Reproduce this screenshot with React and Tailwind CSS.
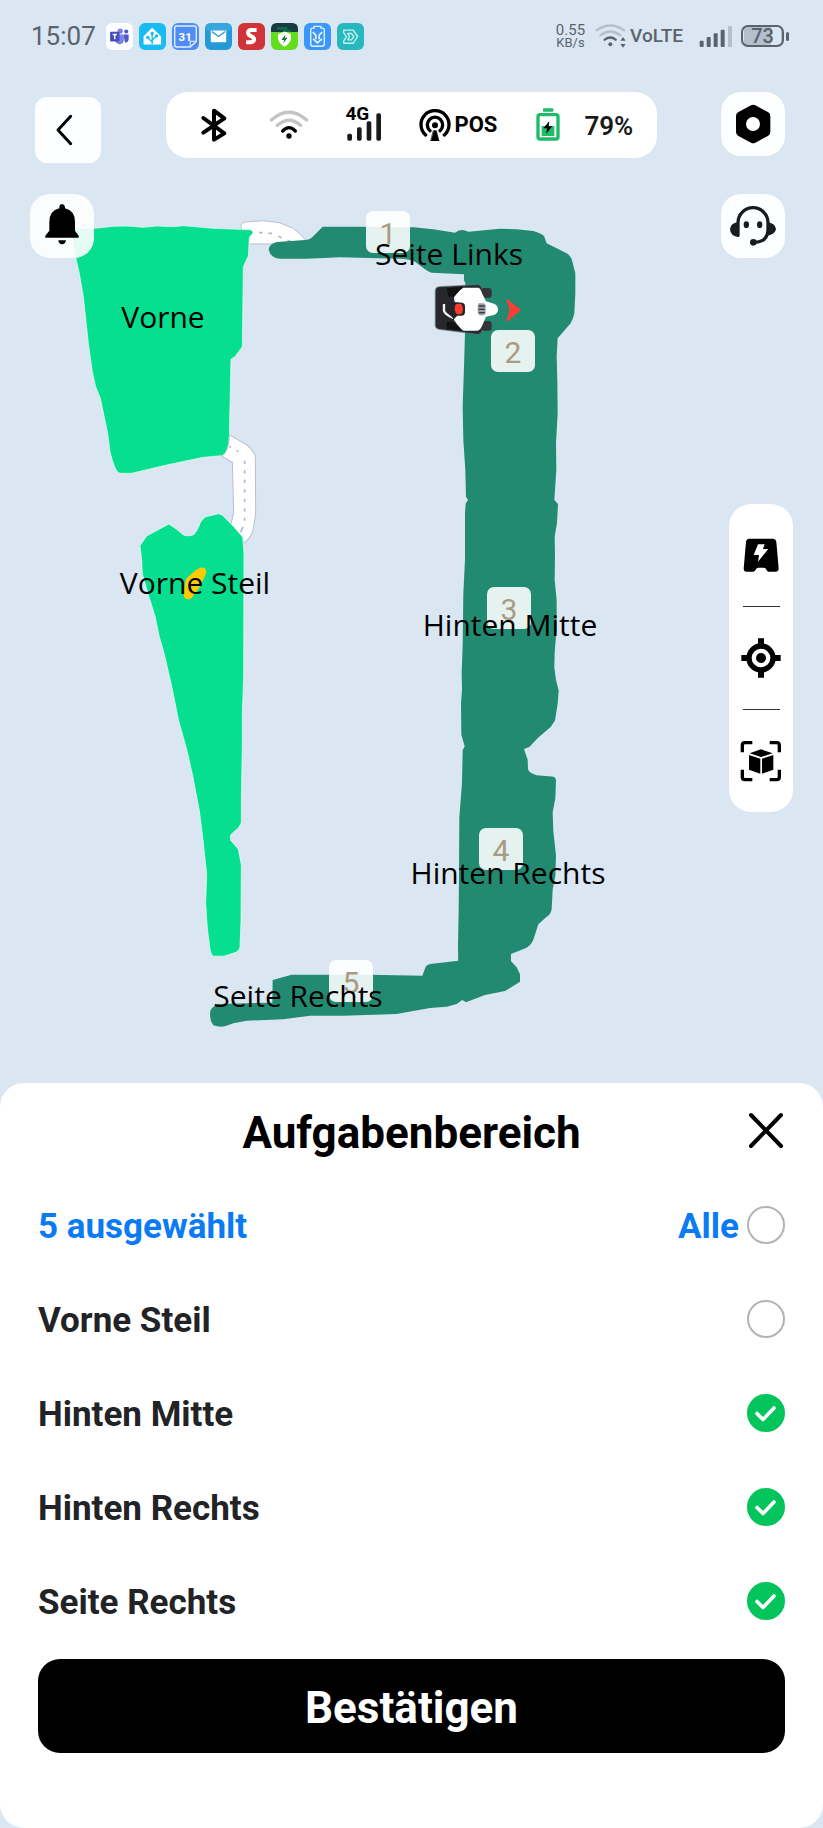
import React from "react";

const zones = [
  { name: "Vorne Steil", selected: false },
  { name: "Hinten Mitte", selected: true },
  { name: "Hinten Rechts", selected: true },
  { name: "Seite Rechts", selected: true },
];

const mapLabels = [
  { text: "Vorne", x: 163, y: 328 },
  { text: "Vorne Steil", x: 195, y: 594 },
  { text: "Seite Links", x: 449, y: 265 },
  { text: "Hinten Mitte", x: 510, y: 636 },
  { text: "Hinten Rechts", x: 508, y: 884 },
  { text: "Seite Rechts", x: 298, y: 1007 },
];

const mapBadges = [
  { n: 1, x: 366, y: 211 },
  { n: 2, x: 491, y: 330 },
  { n: 3, x: 487, y: 587 },
  { n: 4, x: 479, y: 828 },
  { n: 5, x: 329, y: 960 },
];

function Mower() {
  return (
    <g>
      <path d="M106 332Q107 320 120 320L235 314Q245 318 246 330V450Q245 460 235 463L118 448Q106 446 106 436Z" fill="#27282d" stroke="#5d6b70" strokeOpacity=".5" strokeWidth="4" />
      <path d="M140 325L190 320L160 350L145 350Z M140 425L160 425L190 452L140 447Z" fill="#111214" />
      <rect x="244" y="324" width="31" height="29" rx="9" fill="#333338" />
      <rect x="244" y="423" width="31" height="29" rx="9" fill="#333338" />
      <path d="M190 323H236Q242 326 246 340L258 364L282 371Q294 376 294 388Q294 401 282 405L258 410L246 438Q242 449 234 452H190Q180 446 162 420L166 388L162 352Q178 330 190 323Z" fill="#fff" />
      <path d="M132 372V392Q134 402 160 414" fill="none" stroke="#f4f4f4" strokeWidth="7" />
      <path d="M142 366L154 356L164 366L188 368Q195 370 195 378V398Q194 406 186 407H172L162 417L146 402L140 390Z" fill="#252529" />
      <path d="M166 374Q176 368 186 374L189 388L186 400Q176 406 167 399L164 388Z" fill="#ff3b30" />
      <path d="M236 370H252L257 376V400L252 406H238L233 398V377Z" fill="#9a9da3" />
      <path d="M237 378H254M236 388H254M237 398H254" stroke="#36373b" strokeWidth="4" />
      <path d="M318 359Q321 356 326 361L359 386Q364 390 359 394L326 421Q320 426 318 422Q328 402 328 390Q328 378 318 359Z" fill="#fb3e32" />
    </g>
  );
}

function GardenMap() {
  return (
    <svg className="absolute inset-0 h-full w-full" viewBox="0 0 823 1083" preserveAspectRatio="xMidYMin meet" role="img" aria-label="Karte">
      {/* upper passage */}
      <g transform="translate(0 170) scale(.33333)">
        <path d="M722 168Q724 156 738 156L790 152L838 158L880 175L900 192L918 212L880 222H740Z" fill="#fff" stroke="#b9bfd3" strokeWidth="3" />
        <path d="M777 188H788M805 190H816M835 199L845 203M862 211L872 214" stroke="#b4b7c6" strokeWidth="5" />
        <path d="M222 175L285 175L340 169L380 168L430 172L470 168L520 170L550 167L640 175L750 179Q760 181 759 189L748 202L745 258L730 290L727 530L705 560L693 568L688 800Q686 852 665 857L610 862L500 885L395 910H362Q350 909 343 888Q336 870 330 845L323 790L301 685L287 650L277 605L265 520L250 380L238 310L222 240L216 190Z" fill="#05df8f" stroke="#eafff7" strokeWidth="2" strokeLinejoin="round" />
      </g>
      {/* lower passage and Vorne Steil */}
      <g transform="translate(100 430) scale(.33333 .35077)">
        <path d="M388 14L440 42Q462 60 466 74L467 240L458 290Q448 312 432 322L393 268L401 235L397 92L365 75Q388 60 388 14Z" fill="#fff" stroke="#b9bfd3" strokeWidth="3" strokeLinejoin="round" />
        <path d="M434 88V262" stroke="#b4b7c6" strokeWidth="5" strokeDasharray="9 18" />
        <path d="M387 47L393 49M410 59L415 61M429 276L422 291" stroke="#b4b7c6" strokeWidth="5" />
        <path d="M120 330L140 302L207 268L230 283L250 299Q270 305 283 297Q294 283 302 262L315 248L355 239Q365 240 372 247L400 275L428 305L432 350L431 700L427 810L427 900L424 1050V1120L415 1135L394 1152Q388 1162 392 1170L415 1195L424 1240L423 1400L420 1474Q419 1484 408 1489L372 1500H340Q333 1496 330 1480L322 1420L317 1350L320 1265L308 1160L298 1085L278 985L260 910L235 825L215 730L192 635L178 590L165 530L145 470L127 410L125 370Z" fill="#05df8f" stroke="#eafff7" strokeWidth="2" strokeLinejoin="round" />
        <path d="M258 424L284 402Q298 391 310 392Q322 397 318 410Q312 422 300 446L275 480Q264 487 254 478Q248 470 252 455Z" fill="#fdca06" />
      </g>
      {/* selected zones */}
      <g fill="#238a72">
        <path transform="translate(400 180) scale(.33333)" d="M-394 208Q-392 192 -370 186L-285 180Q-274 180 -265 173L-232 140H-130L0 142H40L100 148L165 158Q182 144 205 155L300 146L350 148L400 153Q425 160 432 168L440 190L500 220Q512 228 515 237L526 280V340L523 400Q520 416 512 430L473 475L470 530L472 600L473 700L468 790L469 870L463 960V985H204V960L198 950L196 870L190 780L188 680L192 560L195 460L196 310L192 300V283L95 278Q84 275 75 268L45 245Q30 237 0 236L-180 232L-280 236H-360Q-390 234 -394 208Z" />
        <path transform="translate(190 930) scale(.33333)" d="M805 92L720 102Q709 105 707 110L697 137L540 134H305L248 150L247 218L85 222Q68 228 61 242Q57 270 70 286Q86 292 105 289L130 280L170 272L280 268L360 257L460 257L620 252L720 234L770 230L800 222L817 210L828 217L885 195L945 183L990 155L990 133L980 112L962 92V72L980 40H805Z" />
        <path transform="translate(400 480) scale(.33333 .34439)" d="M204 58L197 68L195 95V230L190 330L188 480L185 560L186 610L183 650L184 740L194 773L188 785L186 880L178 980L177 1150L176 1250L174 1350L177 1430H333V1376L380 1358Q396 1348 401 1332L415 1290L440 1268Q454 1260 455 1245L458 1190L466 1150L468 1090L460 1020L458 965L466 925L468 872Q467 862 456 861L410 857Q388 852 384 840L383 812L372 781L388 775L415 748L452 717L465 698L473 650L476 612L468 580L463 545L464 500L470 430V350L464 290L465 220L464 165L471 125L474 70L463 58Z" />
      </g>
      <g transform="translate(400 180) scale(.33333)">
        <Mower />
      </g>
      {mapBadges.map((b) => (
        <g key={b.n}>
          <rect x={b.x} y={b.y} width="44" height="42" rx="7" fill="#fff" fillOpacity=".89" />
          <text x={b.x + 22} y={b.y + 33} textAnchor="middle" fill="#a99b83" className="font-['Roboto',sans-serif] text-[30px]">
            {b.n}
          </text>
        </g>
      ))}
      {mapLabels.map((l) => (
        <text key={l.text} x={l.x} y={l.y} textAnchor="middle" className="font-['Open_Sans',sans-serif] text-[30px]">
          {l.text}
        </text>
      ))}
    </svg>
  );
}

function AppIcon({ color, children }) {
  return (
    <svg className="size-[27px]" viewBox="0 0 80 80" aria-hidden="true">
      <rect width="80" height="80" rx="18" fill={color} />
      {children}
    </svg>
  );
}

function StatusBar() {
  return (
    <div className="relative flex h-[72px] items-center justify-between pr-[34px] pl-[31px] text-[#59636e]">
      <div className="flex items-center gap-[6px]">
        <time className="pr-1 text-[26px] leading-8">15:07</time>
        <AppIcon color="#fdfeff">
          <circle cx="42" cy="24" r="8" fill="#7b83eb" />
          <circle cx="60" cy="25" r="6" fill="#5059c9" />
          <path d="M52 34H67V48Q66 58 56 58Z" fill="#5059c9" />
          <path d="M28 34H53V50Q52 63 39 63Q29 62 27 52Z" fill="#7b83eb" />
          <rect x="12" y="26" width="28" height="29" rx="3" fill="#464eb8" />
          <path d="M20 34H32M26 34V48" stroke="#fff" strokeWidth="4" />
        </AppIcon>
        <AppIcon color="#18bcf2">
          <path d="M39 16L64 40V62H15V40Z" fill="#fff" stroke="#fff" strokeWidth="3" strokeLinejoin="round" />
          <path d="M39 62V31M39 56L26 44M39 50L52 39" stroke="#18bcf2" strokeWidth="4" fill="none" />
          <circle cx="39" cy="31" r="5" fill="#18bcf2" />
          <circle cx="26" cy="43" r="5" fill="#18bcf2" />
          <circle cx="52" cy="38" r="5" fill="#18bcf2" />
        </AppIcon>
        <AppIcon color="#4f8df5">
          <path d="M14 9H66Q72 9 72 15V54L54 71H14Q8 71 8 65V15Q8 9 14 9Z" fill="none" stroke="#e8f1ff" strokeWidth="4" />
          <path d="M54 71V54H72" fill="none" stroke="#e8f1ff" strokeWidth="3" />
          <text x="39" y="52" textAnchor="middle" fontSize="34" fontWeight="700" fill="#fff">31</text>
        </AppIcon>
        <AppIcon color="#2399d8">
          <path d="M0 18Q0 0 18 0H62Q80 0 80 18L40 40Z" fill="#36a7de" />
          <rect x="17" y="22" width="46" height="35" rx="3" fill="#fff" />
          <path d="M20 25L40 40L60 25" fill="none" stroke="#2399d8" strokeWidth="4" />
        </AppIcon>
        <AppIcon color="#d03438">
          <path d="M55 21H40Q30 21 30 29Q30 35 37 38L44 42Q49 46 47 51Q45 57 38 57H24" fill="none" stroke="#fff" strokeWidth="12" />
        </AppIcon>
        <AppIcon color="#62dc1d">
          <path d="M0 27V18Q0 0 18 0H62Q80 0 80 18V27Z" fill="#173b43" />
          <path d="M18 12H48V20H18ZM34 20H60V27H34Z" fill="#0c6a45" />
          <path d="M40 25L59 33V46Q57 62 40 70Q23 62 21 46V33Z" fill="#fff" />
          <path d="M43 34L31 50H39L36 60L49 44H41Z" fill="#126b4a" />
        </AppIcon>
        <AppIcon color="#3b97fb">
          <path d="M30 10H50V15H55Q60 15 60 21V63Q60 69 54 69H26Q20 69 20 63V21Q20 15 26 15H30Z" fill="none" stroke="#e6f3ff" strokeWidth="4" />
          <path d="M26 27L35 36V48M54 27L45 36V48M27 47L40 59L53 47" fill="none" stroke="#e6f3ff" strokeWidth="5" />
        </AppIcon>
        <AppIcon color="#26b8bd">
          <path d="M20 21H48L61 40L48 60H20V53L28 40L20 29Z" fill="none" stroke="#c8f2f2" strokeWidth="4" strokeLinejoin="round" />
          <path d="M32 31H43L50 40L43 50H32L37 40Z" fill="none" stroke="#c8f2f2" strokeWidth="4" strokeLinejoin="round" />
        </AppIcon>
      </div>
      <div className="flex items-center">
        <div className="mr-[10px] flex flex-col items-center">
          <span className="text-[15px] leading-[14px]">0.55</span>
          <span className="text-[13px] leading-3">KB/s</span>
        </div>
        <svg className="mr-[3px] h-6 w-8" viewBox="555 72 96 72" fill="none" strokeWidth="7" strokeLinecap="round" aria-hidden="true">
          <path d="M560 91Q601 62 642 91M571 106Q601 83 631 106" stroke="#b3bfca" />
          <path d="M584 119Q601 106 617 119" stroke="#59636e" />
          <circle cx="601" cy="133" r="6" fill="#59636e" />
          <path d="M631 122L639 111L647 122ZM631 132L639 143L647 132Z" fill="#59636e" />
        </svg>
        <span className="mr-4 text-[19px] leading-6 font-medium">VoLTE</span>
        <svg className="mr-2 h-6 w-[34px]" viewBox="868 72 102 72" aria-hidden="true">
          <g fill="#59636e">
            <rect x="870" y="122" width="12" height="19" rx="3" />
            <rect x="891" y="111" width="12" height="30" rx="3" />
            <rect x="912" y="100" width="12" height="41" rx="3" />
            <rect x="933" y="89" width="12" height="52" rx="3" />
          </g>
          <rect x="955" y="78" width="12" height="63" rx="3" fill="#b3bfca" />
        </svg>
        <div className="flex items-center gap-[2px]">
          <div className="flex h-[22px] w-[43px] items-center justify-center rounded-[7px] border-2 border-[#59636e] bg-linear-to-r from-[#b3bfca] from-72% to-transparent to-72% bg-origin-content p-px text-[20px] leading-4 font-medium">
            73
          </div>
          <div className="h-[9px] w-[3px] rounded-sm bg-[#59636e]" />
        </div>
      </div>
    </div>
  );
}

function TopBar() {
  return (
    <div className="relative mt-5 flex items-start justify-between pr-[38px] pl-[35px]">
      <button type="button" aria-label="Zurück" className="mt-[5px] flex size-[66px] items-center justify-center rounded-xl bg-[#fcfeff]">
        <svg className="size-10" viewBox="144 331 120 120" aria-hidden="true">
          <path d="M212 350L174 391L212 432" fill="none" stroke="#000" strokeWidth="9" strokeLinecap="round" strokeLinejoin="round" />
        </svg>
      </button>
      <div className="flex h-[66px] w-[491px] items-center gap-[35px] rounded-[22px] bg-white pl-7">
        <svg className="size-10 shrink-0" viewBox="583 316 120 120" aria-label="Bluetooth">
          <path d="M611 355L674 401L643 420V333L674 356L611 399" fill="none" stroke="#000" strokeWidth="12" strokeLinecap="round" strokeLinejoin="round" />
        </svg>
        <svg className="size-10 shrink-0" viewBox="811 316 120 120" fill="none" strokeWidth="10" strokeLinecap="round" aria-label="WLAN">
          <path d="M818 361Q871 314 924 361M836 377Q871 346 906 377" stroke="#c4c4c4" />
          <path d="M852 394Q871 374 890 394" stroke="#000" />
          <circle cx="871" cy="409" r="8" fill="#000" />
        </svg>
        <svg className="size-10 shrink-0 overflow-visible" viewBox="1029 316 120 120" aria-label="4G">
          <text x="1069" y="360" textAnchor="middle" fontSize="57" fontWeight="700">4G</text>
          <g fill="#1a1a1a">
            <rect x="1039" y="402" width="14" height="21" rx="5" />
            <rect x="1068" y="383" width="14" height="40" rx="5" />
            <rect x="1097" y="365" width="14" height="58" rx="5" />
            <rect x="1126" y="341" width="14" height="82" rx="5" />
          </g>
        </svg>
        <div className="flex shrink-0 items-center gap-1">
          <svg className="size-8" viewBox="16 326 96 96" fill="none" stroke="#000" strokeWidth="10" strokeLinecap="round" aria-hidden="true">
            <path d="M36 404A42 42 0 1 1 92 404M49 391A23 23 0 1 1 79 391" />
            <circle cx="64" cy="375" r="9" fill="#000" stroke="none" />
            <path d="M60 391H68L76 422H52Z" fill="#000" stroke="#000" strokeWidth="2" strokeLinejoin="round" />
          </svg>
          <span className="text-[22px] leading-8 font-bold">POS</span>
        </div>
        <div className="flex shrink-0 items-center gap-5">
          <svg className="h-10 w-8" viewBox="358 316 96 120" aria-hidden="true">
            <rect x="391" y="326" width="31" height="10" rx="2" fill="#1fbb69" />
            <rect x="376" y="345" width="60" height="73" rx="6" fill="#fff" stroke="#1fbb69" strokeWidth="10" />
            <rect x="387" y="379" width="38" height="30" fill="#1fbb69" />
            <path d="M410 364L392 386H403L401 402L419 380H408Z" fill="#000" />
          </svg>
          <span className="pt-[2px] text-[26px] leading-8 font-semibold text-[#1a1a1a]">79%</span>
        </div>
      </div>
      <button type="button" aria-label="Einstellungen" className="flex size-16 items-center justify-center rounded-[20px] bg-[#fcfeff]">
        <svg className="size-10" viewBox="967 313 120 120" aria-hidden="true">
          <path fillRule="evenodd" d="M1021 317Q1027 313 1034 317L1073 338Q1079 342 1079 349V397Q1079 404 1073 408L1034 429Q1027 433 1021 429L982 408Q976 404 976 397V349Q976 342 982 338ZM1027 352A21 21 0 1 0 1027 394A21 21 0 1 0 1027 352Z" />
        </svg>
      </button>
    </div>
  );
}

function SideTools() {
  return (
    <div className="relative mt-[246px] mr-[30px] flex w-16 flex-col items-center self-end rounded-[22px] bg-white">
      <button type="button" aria-label="Ladestation" className="flex h-[102px] w-full items-center justify-center">
        <svg className="size-12" viewBox="111 123 144 144" aria-hidden="true">
          <path d="M148 146H218Q228 147 229 156L236 235Q236 245 228 245H205Q200 244 198 237Q196 233 191 233H174Q170 233 168 238Q165 245 160 245H138Q131 244 131 236L138 155Q139 147 148 146Z" />
          <path d="M174 163H194L189 177H205L174 215L177 195H161Z" fill="#fff" />
        </svg>
      </button>
      <div className="h-px w-[37px] bg-[#333]" />
      <button type="button" aria-label="Zentrieren" className="flex h-[102px] w-full items-center justify-center">
        <svg className="size-12" viewBox="109 432 144 144" aria-hidden="true">
          <circle cx="181" cy="504" r="36" fill="none" stroke="#000" strokeWidth="16" />
          <circle cx="181" cy="504" r="15" />
          <path d="M172 445H190V466H172ZM172 542H190V563H172ZM122 495H143V513H122ZM219 495H240V513H219Z" />
        </svg>
      </button>
      <div className="h-px w-[37px] bg-[#333]" />
      <button type="button" aria-label="3D-Ansicht" className="flex h-[102px] w-full items-center justify-center">
        <svg className="size-12" viewBox="110 742 144 144" aria-hidden="true">
          <path d="M126 788V767Q126 759 134 759H156M208 759H229Q237 759 237 767V788M237 840V862Q237 870 229 870H208M156 870H134Q126 870 126 862V840" fill="none" stroke="#000" strokeWidth="10" />
          <path d="M182 779L217 791L182 802L148 791ZM146 796L180 807V852L146 840ZM185 807L219 796V840L185 852Z" />
        </svg>
      </button>
    </div>
  );
}

function RoundCheck({ checked }) {
  return (
    <span className="relative block size-[38px]">
      <input
        type="checkbox"
        defaultChecked={checked}
        className="peer block size-[38px] appearance-none rounded-full border-2 border-[#b3b3b3] checked:border-[#04c45c] checked:bg-[#04c45c]"
      />
      <svg className="pointer-events-none absolute inset-0 hidden size-full peer-checked:block" viewBox="0 0 38 38" aria-hidden="true">
        <path d="M10 19.5L16 25.5L27 14" fill="none" stroke="#fff" strokeWidth="3.6" strokeLinecap="round" strokeLinejoin="round" />
      </svg>
    </span>
  );
}

export default function App() {
  return (
    <div className="flex min-h-screen flex-col bg-[#dae7f2] font-['Roboto',sans-serif] text-black">
      <main className="relative flex min-h-[960px] flex-1 flex-col">
        <GardenMap />
        <StatusBar />
        <TopBar />
        <div className="relative mt-[31px] flex justify-between pr-[38px] pl-[30px]">
          <button type="button" aria-label="Benachrichtigungen" className="flex size-16 items-center justify-center rounded-[20px] bg-[#fdfeff]/90">
            <svg className="size-12" viewBox="116 96 144 144" aria-hidden="true">
              <path d="M180 115V110Q181 102 188 102Q195 102 197 110V115Q227 122 227 156V182L238 197V203H138V197L150 182V156Q150 122 180 115Z" />
              <path d="M177 211H200Q198 223 188 223Q178 222 177 211Z" />
            </svg>
          </button>
          <button type="button" aria-label="Support" className="flex size-16 items-center justify-center rounded-[20px] bg-[#fcfeff]">
            <svg className="size-12" viewBox="987 66 144 144" aria-hidden="true">
              <path d="M1014 166V128A45 45 0 0 1 1104 128V150Q1102 187 1062 187" fill="none" stroke="#1a1b1e" strokeWidth="10" strokeLinecap="round" />
              <path d="M1017 126V171Q990 168 990 147Q991 129 1017 126ZM1101 126Q1127 130 1128 147Q1127 162 1101 168Z" fill="#1a1b1e" />
              <ellipse cx="1039" cy="134" rx="8" ry="10" fill="#1a1b1e" />
              <ellipse cx="1079" cy="134" rx="8" ry="10" fill="#1a1b1e" />
              <circle cx="1060" cy="187" r="10" fill="#1a1b1e" />
            </svg>
          </button>
        </div>
        <SideTools />
      </main>

      <section className="rounded-3xl bg-white px-[38px] pb-[75px]">
        <header className="grid h-[95px] grid-cols-[38px_1fr_38px] items-center">
          <h1 className="col-start-2 pt-1 text-center text-[44px] leading-[52px] font-bold">Aufgabenbereich</h1>
          <button type="button" aria-label="Schließen" className="flex size-10 items-center justify-center">
            <svg className="size-10" viewBox="0 0 40 40" aria-hidden="true">
              <path d="M4 4L34 35M34 4L4 35" fill="none" stroke="#000" strokeWidth="4" strokeLinecap="round" />
            </svg>
          </button>
        </header>
        <div className="flex h-[94px] items-center justify-between text-[35px] leading-[42px] font-bold text-[#0b7bf5]">
          <span className="pt-[3px]">5 ausgewählt</span>
          <label className="flex items-center gap-2">
            <span className="pt-[3px]">Alle</span>
            <RoundCheck checked={false} />
          </label>
        </div>
        {zones.map((z) => (
          <label key={z.name} className="flex h-[94px] items-center justify-between text-[35px] leading-[42px] font-bold text-[#222326]">
            <span className="pt-[3px]">{z.name}</span>
            <RoundCheck checked={z.selected} />
          </label>
        ))}
        <button type="button" className="mt-[11px] h-[94px] w-full rounded-[22px] bg-black pt-1 text-[44px] leading-[52px] font-bold text-white">
          Bestätigen
        </button>
      </section>
    </div>
  );
}
